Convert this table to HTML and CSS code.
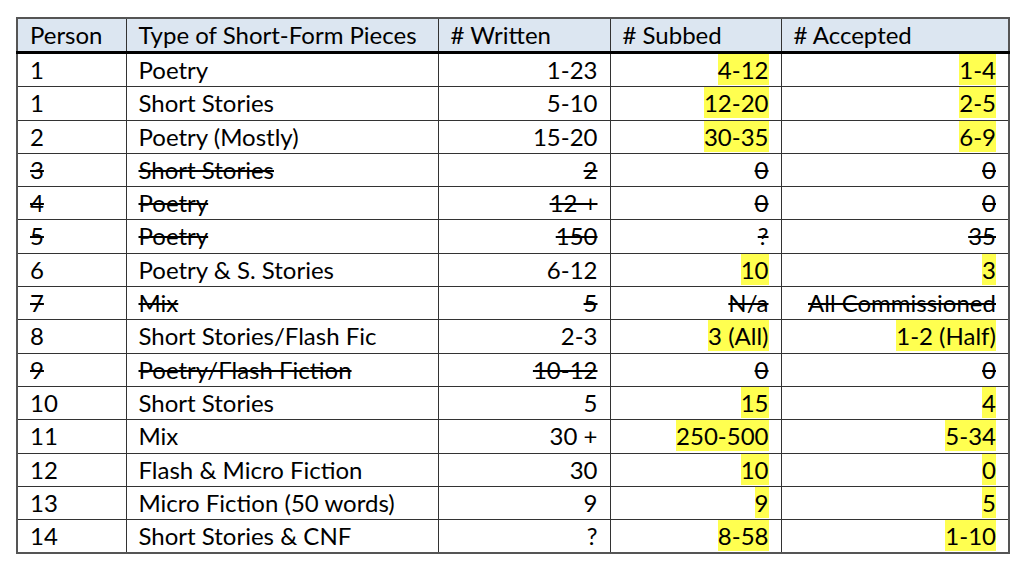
FILE: index.html
```html
<!DOCTYPE html>
<html>
<head>
<meta charset="utf-8">
<link rel="stylesheet" href="styles.css">
</head>
<body>
<div class="page">
<table class="data">
  <colgroup>
    <col class="c-person"><col class="c-type"><col class="c-written"><col class="c-subbed"><col class="c-accepted">
  </colgroup>
  <thead>
    <tr><th>Person</th><th>Type of Short-Form Pieces</th><th># Written</th><th># Subbed</th><th># Accepted</th></tr>
  </thead>
  <tbody>
    <tr><td>1</td><td>Poetry</td><td class="num">1-23</td><td class="num"><mark>4-12</mark></td><td class="num"><mark>1-4</mark></td></tr>
    <tr><td>1</td><td>Short Stories</td><td class="num">5-10</td><td class="num"><mark>12-20</mark></td><td class="num"><mark>2-5</mark></td></tr>
    <tr><td>2</td><td>Poetry (Mostly)</td><td class="num">15-20</td><td class="num"><mark>30-35</mark></td><td class="num"><mark>6-9</mark></td></tr>
    <tr class="struck"><td>3</td><td>Short Stories</td><td class="num">2</td><td class="num">0</td><td class="num">0</td></tr>
    <tr class="struck"><td>4</td><td>Poetry</td><td class="num">12 +</td><td class="num">0</td><td class="num">0</td></tr>
    <tr class="struck"><td>5</td><td>Poetry</td><td class="num">150</td><td class="num">?</td><td class="num">35</td></tr>
    <tr><td>6</td><td>Poetry &amp; S. Stories</td><td class="num">6-12</td><td class="num"><mark>10</mark></td><td class="num"><mark>3</mark></td></tr>
    <tr class="struck"><td>7</td><td>Mix</td><td class="num">5</td><td class="num">N/a</td><td class="num">All Commissioned</td></tr>
    <tr><td>8</td><td>Short Stories/Flash Fic</td><td class="num">2-3</td><td class="num"><mark>3 (All)</mark></td><td class="num"><mark>1-2 (Half)</mark></td></tr>
    <tr class="struck"><td>9</td><td>Poetry/Flash Fiction</td><td class="num">10-12</td><td class="num">0</td><td class="num">0</td></tr>
    <tr><td>10</td><td>Short Stories</td><td class="num">5</td><td class="num"><mark>15</mark></td><td class="num"><mark>4</mark></td></tr>
    <tr><td>11</td><td>Mix</td><td class="num">30 +</td><td class="num"><mark>250-500</mark></td><td class="num"><mark>5-34</mark></td></tr>
    <tr><td>12</td><td>Flash &amp; Micro Fiction</td><td class="num">30</td><td class="num"><mark>10</mark></td><td class="num"><mark>0</mark></td></tr>
    <tr><td>13</td><td>Micro Fiction (50 words)</td><td class="num">9</td><td class="num"><mark>9</mark></td><td class="num"><mark>5</mark></td></tr>
    <tr><td>14</td><td>Short Stories &amp; CNF</td><td class="num">?</td><td class="num"><mark>8-58</mark></td><td class="num"><mark>1-10</mark></td></tr>
  </tbody>
</table>
</div>
</body>
</html>
```

FILE: styles.css
```css
html, body {
  margin: 0;
  padding: 0;
  background: #ffffff;
}

.page {
  padding: 17px 16px 0 16px;
}

.data {
  border-collapse: collapse;
  width: 992px;
  table-layout: fixed;
  font-family: "Lato", "Open Sans", sans-serif;
  font-size: 24px;
  color: #000;
  border: 2px solid #555;
}

.c-person { width: 109px; }
.c-type { width: 312px; }
.c-written { width: 172px; }
.c-subbed { width: 171px; }
.c-accepted { width: 228px; }

.data th,
.data td {
  border: 1px solid #333;
  padding: 0 12px;
  line-height: 31px;
  vertical-align: top;
  text-align: left;
  white-space: nowrap;
}

.data th {
  font-weight: normal;
  background: #dce6f1;
  height: 32px;
  border-bottom: 3px solid #000;
}

.data td {
  height: 32.3px;
}

.data td.num {
  text-align: right;
}

.data mark {
  background: #ffff50;
  color: #000;
  display: inline-block;
  line-height: 31px;
}

.struck td {
  text-decoration: line-through;
}
```
